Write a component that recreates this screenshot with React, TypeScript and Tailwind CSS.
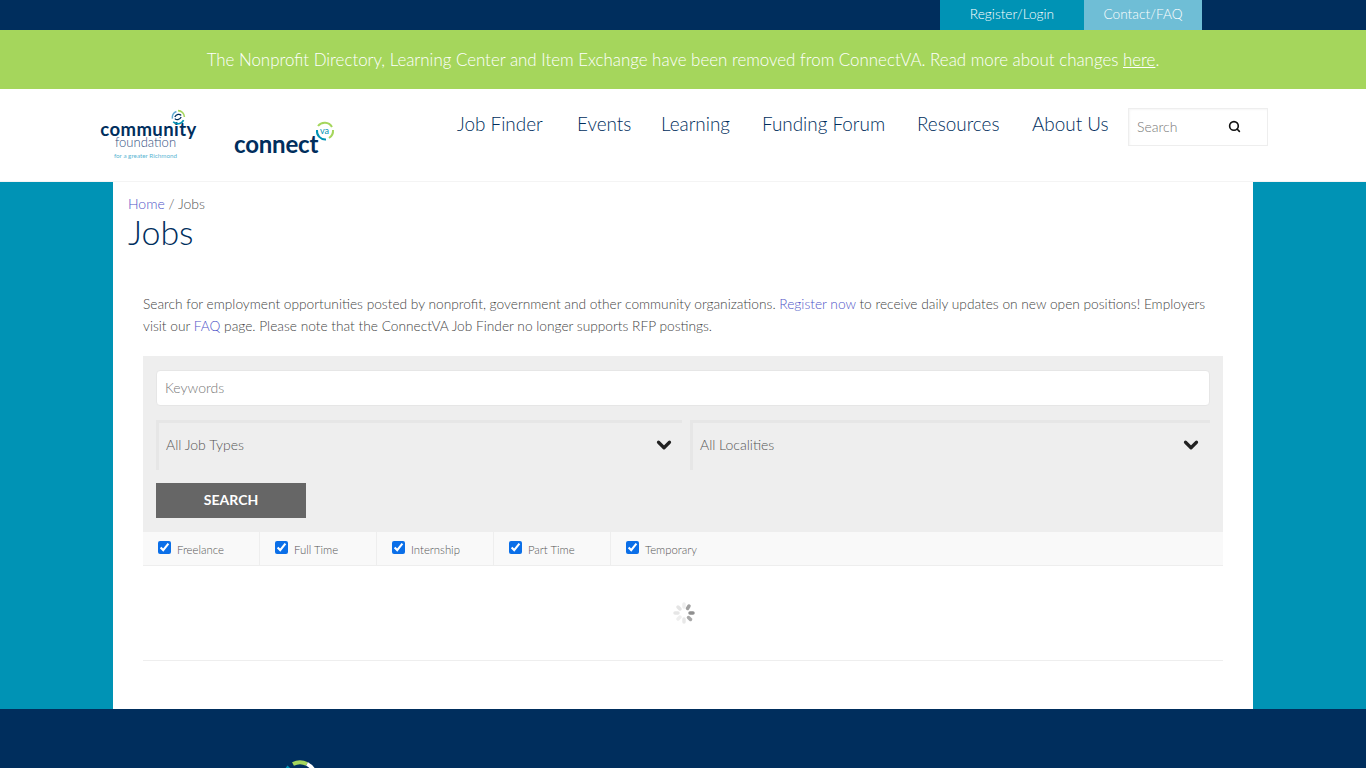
import { ChevronDown, Search } from 'lucide-react';

const NAV = [
  { label: 'Job Finder', width: 'w-[120px]' },
  { label: 'Events', width: 'w-[84px]' },
  { label: 'Learning', width: 'w-[101px]' },
  { label: 'Funding Forum', width: 'w-[155px]' },
  { label: 'Resources', width: 'w-[115px]' },
  { label: 'About Us', width: 'w-[96px]' },
];

const JOB_TYPES = ['Freelance', 'Full Time', 'Internship', 'Part Time', 'Temporary'];

function Swirl({ className }: { className?: string }) {
  return (
    <svg viewBox="0 0 36 36" className={className} fill="none">
      <path d="M11 5a15 15 0 0 1 14 0" stroke="#a5d65c" strokeWidth="4" />
      <path d="M25 5a15 15 0 0 1 8 10" stroke="#ffffff" strokeWidth="4" />
      <path d="M7 8a15 15 0 0 0-4 8" stroke="#0093b5" strokeWidth="4" />
    </svg>
  );
}

function Logos() {
  return (
    <div className="flex w-[357px] shrink-0 items-start pl-[99px] pt-[20px]">
      <div className="relative flex w-[99px] flex-col items-center text-[#002e5d]">
        <svg viewBox="0 0 20 20" className="h-[16px] w-[16px] translate-x-[29px]" fill="none">
          <path d="M10 2a8 8 0 0 1 8 8" stroke="#a5d65c" strokeWidth="2" />
          <path d="M17 14a8 8 0 0 1-13 2" stroke="#0093b5" strokeWidth="2" />
          <path d="M3 12a8 8 0 0 1 5-9" stroke="#5fa8cf" strokeWidth="2" />
          <path d="M6 10c2-4 6-4 8-2M14 10c-2 4-6 4-8 2" stroke="#002e5d" strokeWidth="1.6" />
        </svg>
        <span className="mt-[-5px] text-[18.5px] font-bold leading-[18px] tracking-[0.45px] font-['Lato',sans-serif]">community</span>
        <span className="mt-[-2px] -translate-x-[3px] text-[13px] font-light leading-[12px] text-[#33507f] font-['Lato',sans-serif]">foundation</span>
        <span className="mt-[4px] -translate-x-[3px] whitespace-nowrap text-[6.3px] leading-[7px] text-[#5db6d3] font-['Lato',sans-serif]">for a greater Richmond</span>
      </div>
      <div className="relative ml-[36px] mt-[20px] w-[102px] text-[#002e5d]">
        <span className="text-[24px] font-bold leading-[30px] tracking-[-0.2px] font-['Lato',sans-serif]">connect</span>
        <svg viewBox="0 0 20 20" className="absolute left-[81px] top-[-8px] h-[20px] w-[20px]" fill="none">
          <path d="M3 5a8.500 8.500 0 0 1 14 1" stroke="#a5d65c" strokeWidth="2" />
          <path d="M18 9a8.500 8.500 0 0 1-4 8" stroke="#a5d65c" strokeWidth="2" />
          <path d="M11 18.500A8.500 8.500 0 0 1 2 9" stroke="#0093b5" strokeWidth="2" />
        </svg>
        <span className="absolute left-[86px] top-[-5px] text-[9px] font-normal leading-[14px] text-[#0093b5] font-['Lato',sans-serif]">va</span>
      </div>
    </div>
  );
}

export default function App() {
  return (
    <div className="h-[768px] overflow-hidden bg-[#0093b5] font-['Lato',sans-serif] text-[#555]">
      <div className="flex h-[30px] justify-end bg-[#002e5d] pr-[164px] text-[13.7px] font-light leading-[28px] text-white">
        <a className="w-[144px] bg-[#0093b5] text-center">Register/Login</a>
        <a className="w-[118px] bg-[#6fbed6] text-center">Contact/FAQ</a>
      </div>

      <div className="flex h-[59px] items-center justify-center bg-[#a5d65c] text-[16.9px] font-light text-white">
        <p>
          The Nonprofit Directory, Learning Center and Item Exchange have been removed from ConnectVA. Read more about changes <a className="underline">here</a>.
        </p>
      </div>

      <header className="flex h-[93px] border-b border-[#f4f4f4] bg-white">
        <Logos />
        <nav className="flex h-[71px] items-center pl-[100px] text-[18.9px] font-light text-[#002e5d]">
          {NAV.map((item) => (
            <a key={item.label} className={`${item.width} whitespace-nowrap`}>{item.label}</a>
          ))}
        </nav>
        <div className="mt-[19px] flex h-[38px] w-[140px] items-center justify-between border border-[#eee] pb-[1px] pl-[8px] pr-[26px] text-[14px] font-light text-[#777] shadow-[inset_1px_1px_2px_rgba(0,0,0,0.04)]">
          <span>Search</span>
          <Search className="h-[13px] w-[13px] text-[#111]" strokeWidth={3} />
        </div>
      </header>

      <main className="mx-auto h-[527px] w-[1140px] bg-white px-[15px]">
        <div className="pt-[14px] text-[14px] leading-[16px] font-light text-[#555]">
          <a className="text-[#4f55c8]">Home</a> / Jobs
        </div>
        <h1 className="text-[34px] font-light leading-[40px] text-[#002e5d]">Jobs</h1>

        <div className="px-[15px]">
          <p className="mt-[41px] text-[13.72px] font-light leading-[22px] text-[#444]">
            Search for employment opportunities posted by nonprofit, government and other community organizations. <a className="text-[#4f55c8]">Register now</a> to receive daily updates on new open positions! Employers visit our <a className="text-[#4f55c8]">FAQ</a> page. Please note that the ConnectVA Job Finder no longer supports RFP postings.
          </p>

          <form className="mt-[19px] flex h-[175px] flex-col bg-[#eeeeee] px-[13px] pt-[14px]">
            <div className="flex h-[36px] items-center rounded-[4px] border border-[#e6e6e6] bg-white pb-[2px] pl-[8px] text-[14px] font-light text-[#777]">Keywords</div>
            <div className="mt-[14px] flex gap-[8px]">
              <div className="flex h-[50px] w-[526px] items-center justify-between border-l-[3px] border-t-[3px] border-[#e6e6e6] pb-[4px] pl-[7px] pr-[7px] text-[14px] font-light text-[#555]">
                <span>All Job Types</span>
                <ChevronDown className="h-[22px] w-[22px] text-[#222]" strokeWidth={3.5} />
              </div>
              <div className="flex h-[50px] flex-1 items-center justify-between border-l-[3px] border-t-[3px] border-[#e6e6e6] pb-[4px] pl-[7px] pr-[8px] text-[14px] font-light text-[#555]">
                <span>All Localities</span>
                <ChevronDown className="h-[22px] w-[22px] text-[#222]" strokeWidth={3.5} />
              </div>
            </div>
            <button type="button" className="mt-[13px] h-[35px] w-[150px] bg-[#666] pb-[2px] text-[14px] font-bold text-white">SEARCH</button>
          </form>

          <div className="flex h-[35px] border-y border-[#eee] bg-[#f9f9f9]">
            {JOB_TYPES.map((type) => (
              <label key={type} className="flex h-full w-[117px] items-start gap-[6px] border-r border-[#eee] pl-[15px] pt-[9px] text-[11.35px] font-light text-[#555] last:border-r-0">
                <input type="checkbox" defaultChecked className="h-[13px] w-[13px] accent-[#0b6fe8]" />
                <span className="mt-[2px] leading-[14px]">{type}</span>
              </label>
            ))}
          </div>

          <div className="flex h-[95px] items-center justify-center border-b border-[#eee]">
            <svg viewBox="0 0 24 24" className="h-[24px] w-[24px] translate-x-[1px]" fill="none" strokeLinecap="round" strokeWidth="3.500">
              <path d="M12 3v3" stroke="#eeeeee" />
              <path d="M17 5l-1.500 2.500" stroke="#a0a0a0" />
              <path d="M21 12h-3" stroke="#8f8f8f" />
              <path d="M18.500 18.500l-2-2" stroke="#a8a8a8" />
              <path d="M12 21v-3" stroke="#e8e8e8" />
              <path d="M6 18l2-2" stroke="#eeeeee" />
              <path d="M3 12h3" stroke="#e6e6e6" />
              <path d="M6 6l2 2" stroke="#e4e4e4" />
            </svg>
          </div>
        </div>
      </main>

      <footer className="relative h-[59px] overflow-hidden bg-[#002e5d]">
        <Swirl className="absolute left-[282px] top-[50px] h-[36px] w-[36px]" />
      </footer>
    </div>
  );
}
